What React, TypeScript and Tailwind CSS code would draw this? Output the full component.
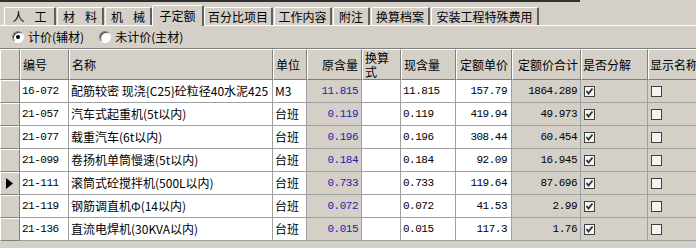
import React from 'react';

const tabs = [
  { label: ['人', '工'], w: 'w-[52px]' },
  { label: ['材', '料'], w: 'w-[47px]' },
  { label: ['机', '械'], w: 'w-[47px]' },
  { label: ['子定额'], w: 'w-[52px]', active: true },
  { label: ['百分比项目'], w: 'w-[69px]' },
  { label: ['工作内容'], w: 'w-[58px]' },
  { label: ['附注'], w: 'w-[37px]' },
  { label: ['换算档案'], w: 'w-[59px]' },
  { label: ['安装工程特殊费用'], w: 'w-[108px]' },
];

const rows = [
  ['16-072', '配筋较密 现浇{C25}砼粒径40水泥425', 'M3', '11.815', '11.815', '157.79', '1864.289'],
  ['21-057', '汽车式起重机(5t以内)', '台班', '0.119', '0.119', '419.94', '49.973'],
  ['21-077', '载重汽车(6t以内)', '台班', '0.196', '0.196', '308.44', '60.454'],
  ['21-099', '卷扬机单筒慢速(5t以内)', '台班', '0.184', '0.184', '92.09', '16.945'],
  ['21-111', '滚筒式砼搅拌机(500L以内)', '台班', '0.733', '0.733', '119.64', '87.696'],
  ['21-119', '钢筋调直机Φ(14以内)', '台班', '0.072', '0.072', '41.53', '2.99'],
  ['21-136', '直流电焊机(30KVA以内)', '台班', '0.015', '0.015', '117.3', '1.76'],
];

const cols = 'grid grid-cols-[20px_49px_204px_34px_55px_39px_55px_56px_69px_67px_90px]';

function Radio({ checked }: { checked?: boolean }) {
  return (
    <span className="relative w-[12px] h-[12px] rounded-full border border-t-[#808080] border-l-[#808080] border-b-white border-r-white bg-white flex items-center justify-center shadow-[inset_1px_1px_0_#404040]">
      {checked && <span className="w-[4px] h-[4px] rounded-full bg-black" />}
    </span>
  );
}

function Check({ on }: { on?: boolean }) {
  return (
    <span className="w-[11px] h-[11px] border border-[#404040] bg-[#f4f4f4] flex items-center justify-center">
      {on && (
        <svg width="9" height="9" viewBox="0 0 9 9">
          <path d="M1.5 4 L3.5 6.5 L7.5 1.5" stroke="#303030" strokeWidth="1.8" fill="none" />
        </svg>
      )}
    </span>
  );
}

const hdr =
  'h-[31px] flex items-center border-t border-l border-t-white border-l-white border-r border-b border-r-[#808080] border-b-[#808080] overflow-hidden whitespace-nowrap';
const cell = 'h-[23px] flex items-center border-r border-b border-[#a0a0a0] overflow-hidden whitespace-nowrap';
const num = "font-['Liberation_Mono'] text-[11px] tracking-[-0.5px]";

export default function App() {
  return (
    <div className="w-[696px] h-[248px] bg-[#d4d0c8] overflow-hidden font-['Noto_Sans_CJK_SC',sans-serif] text-[12px] text-black leading-none">
      {/* top panel edge */}
      <div className="h-[2px] w-[580px] bg-[#303030]" />

      {/* tabs */}
      <div className="h-[24px] flex items-end pl-[4px] gap-[1px] border-b border-white">
        {tabs.map((t, i) => (
          <div
            key={i}
            className={`${t.w} ${
              t.active ? 'h-[21px] -mx-[1px] bg-[#d4d0c8] -mb-px pb-px' : 'h-[18px]'
            } shrink-0 flex items-center justify-center gap-[10px] border-l border-t border-white border-r-2 border-r-[#606060] rounded-t-[2px]`}
          >
            {t.label.map((s, j) => (
              <span key={j}>{s}</span>
            ))}
          </div>
        ))}
      </div>

      {/* radio row */}
      <div className="h-[22px] flex items-center pl-[12px]">
        <label className="flex items-center gap-[4px]">
          <Radio checked />
          <span>计价(辅材)</span>
        </label>
        <label className="flex items-center gap-[4px] ml-[15px]">
          <Radio />
          <span>未计价(主材)</span>
        </label>
      </div>

      {/* grid */}
      <div className="border-t border-[#808080]">
        <div className={cols}>
          <div className={hdr} />
          <div className={`${hdr} pl-[2px]`}>编号</div>
          <div className={`${hdr} pl-[2px]`}>名称</div>
          <div className={`${hdr} pl-[2px]`}>单位</div>
          <div className={`${hdr} justify-end pr-[3px]`}>原含量</div>
          <div className={`${hdr} pl-[2px] flex-col !items-start justify-center gap-[2px]`}>
            <span>换算</span>
            <span>式</span>
          </div>
          <div className={`${hdr} pl-[2px]`}>现含量</div>
          <div className={`${hdr} pl-[3px]`}>定额单价</div>
          <div className={`${hdr} pl-[5px]`}>定额价合计</div>
          <div className={`${hdr} pl-[1px]`}>是否分解</div>
          <div className={`${hdr} pl-[1px]`}>显示名称</div>
        </div>
        {rows.map((r, i) => (
          <div key={i} className={cols}>
            <div className="h-[23px] flex items-center pl-[5px] border-t border-l border-white border-r border-b border-r-[#808080] border-b-[#808080]">
              {i === 4 && (
                <svg width="7" height="11" viewBox="0 0 7 11">
                  <path d="M0 0 L7 5.5 L0 11 Z" fill="#000" />
                </svg>
              )}
            </div>
            <div className={`${cell} bg-white pl-[2px] ${num}`}>{r[0]}</div>
            <div className={`${cell} bg-white pl-[2px]`}>{r[1]}</div>
            <div className={`${cell} bg-white pl-[2px]`}>{r[2]}</div>
            <div className={`${cell} justify-end pr-[3px] text-[#1c1cb0] ${num}`}>{r[3]}</div>
            <div className={`${cell} bg-white`} />
            <div className={`${cell} bg-white pl-[2px] ${num}`}>{r[4]}</div>
            <div className={`${cell} bg-white justify-end pr-[4px] ${num}`}>{r[5]}</div>
            <div className={`${cell} justify-end pr-[3px] ${num}`}>{r[6]}</div>
            <div className={`${cell} pl-[3px]`}>
              <Check on />
            </div>
            <div className={`${cell} pl-[3px]`}>
              <Check />
            </div>
          </div>
        ))}
      </div>
    </div>
  );
}
